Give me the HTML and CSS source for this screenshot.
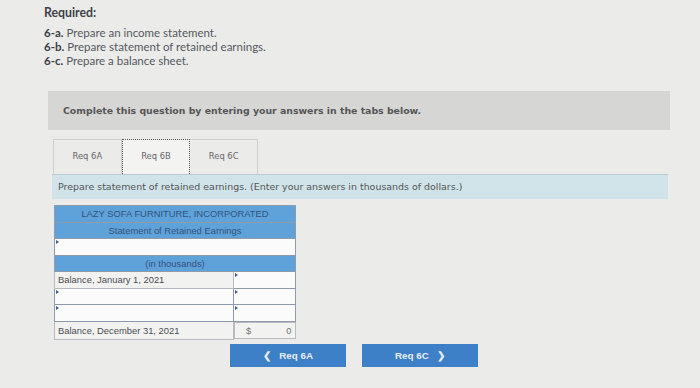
FILE: index.html
```html
<!DOCTYPE html>
<html lang="en">
<head>
    <meta charset="UTF-8">
    <meta name="viewport" content="width=device-width, initial-scale=1.0">
    <title>Required 6-b</title>
    <link rel="stylesheet" href="styles.css">
</head>
<body>
    <div class="page">
        <div class="required">
            <h2>Required:</h2>
            <p><b>6-a.</b> Prepare an income statement.</p>
            <p><b>6-b.</b> Prepare statement of retained earnings.</p>
            <p><b>6-c.</b> Prepare a balance sheet.</p>
        </div>

        <div class="panel">
            <div class="prompt">Complete this question by entering your answers in the tabs below.</div>

            <div class="tabs">
                <div class="tab">Req 6A</div>
                <div class="tab active">Req 6B</div>
                <div class="tab">Req 6C</div>
            </div>

            <div class="instructions">Prepare statement of retained earnings. (Enter your answers in thousands of dollars.)</div>

            <table class="statement">
                <tr><td colspan="2" class="head">LAZY SOFA FURNITURE, INCORPORATED</td></tr>
                <tr><td colspan="2" class="head">Statement of Retained Earnings</td></tr>
                <tr><td colspan="2" class="input"></td></tr>
                <tr><td colspan="2" class="head">(in thousands)</td></tr>
                <tr><td class="label">Balance, January 1, 2021</td><td class="input"></td></tr>
                <tr><td class="input"></td><td class="input"></td></tr>
                <tr><td class="input"></td><td class="input"></td></tr>
                <tr><td class="label">Balance, December 31, 2021</td><td class="total"><span>$</span><span>0</span></td></tr>
            </table>

            <div class="nav">
                <button class="nav-btn">&#10094;&nbsp;&nbsp;&nbsp;Req 6A</button>
                <button class="nav-btn">Req 6C&nbsp;&nbsp;&nbsp;&#10095;</button>
            </div>
        </div>
    </div>
</body>
</html>
```

FILE: styles.css
```css
body {
    margin: 0;
    background: #ebebea;
    font-family: 'Lato', 'Open Sans', sans-serif;
    color: #4a4d52;
}

.page {
    padding: 5px 0 0 44px;
}

.required h2 {
    font-size: 12.3px;
    font-weight: bold;
    margin: 0 0 6px;
    color: #3f4247;
}

.required p {
    font-size: 11.5px;
    margin: 0;
    line-height: 14px;
    color: #555960;
}

.required b {
    color: #3c4046;
}

.panel {
    margin: 23px 0 0 4px;
    width: 622px;
}

.prompt {
    background: #d6d6d5;
    height: 39px;
    line-height: 39px;
    padding-left: 15px;
    font-family: 'DejaVu Sans', Verdana, sans-serif;
    font-weight: bold;
    font-size: 9.35px;
    color: #555;
    box-sizing: border-box;
}

.tabs {
    display: flex;
    margin: 9px 0 0 5px;
    height: 35px;
    border-left: 1px solid #cfcfcf;
    width: 204px;
}

.tab {
    width: 68px;
    border: 1px solid #cfcfcf;
    border-left: none;
    border-bottom: none;
    font-family: 'DejaVu Sans', Verdana, sans-serif;
    font-size: 8.4px;
    color: #666;
    display: flex;
    align-items: center;
    justify-content: center;
    padding-bottom: 2px;
}

.tab.active {
    background: #f3f3f2;
    border: 1px dotted #555;
    border-bottom: none;
}

.instructions {
    margin: 0 2px 0 4px;
    height: 24px;
    line-height: 24px;
    background: #cfe3e9;
    border-top: 1px solid #b9ccd2;
    padding-left: 6px;
    font-family: 'DejaVu Sans', Verdana, sans-serif;
    font-size: 9.45px;
    color: #555;
}

.statement {
    margin: 6px 0 0 6px;
    border-collapse: collapse;
    width: 242px;
    font-family: 'Liberation Sans', Arial, sans-serif;
    font-size: 9.4px;
}

.statement td {
    height: 15.5px;
    padding: 0 3px;
    border: 1px solid #8d9bad;
}

.statement td:first-child {
    width: 172px;
}

.head {
    background: #5fa2da;
    text-align: center;
    color: #33527a;
    border-color: #7fa9cf;
}

.input {
    background: #fbfbfb;
    position: relative;
}

.input::before {
    content: "";
    position: absolute;
    top: 1px;
    left: 1px;
    border-width: 2px 0 2px 3px;
    border-style: solid;
    border-color: transparent transparent transparent #3e5f8e;
}

.label {
    background: #f2f2f1;
    color: #4a4d52;
    border-color: #b8bcc2 !important;
}

.total {
    background: #f2f2f1;
    display: flex;
    justify-content: space-between;
    align-items: center;
    padding: 0 3px 0 11px !important;
    color: #777;
    border-color: #b8bcc2 !important;
}

.nav {
    display: flex;
    gap: 16px;
    margin: 4px 0 0 182px;
}

.nav-btn {
    width: 116px;
    height: 23px;
    background: #3d80c8;
    color: #e6eef8;
    border: none;
    font-family: 'Liberation Sans', Arial, sans-serif;
    font-weight: bold;
    font-size: 9.8px;
    padding: 0;
}
```
